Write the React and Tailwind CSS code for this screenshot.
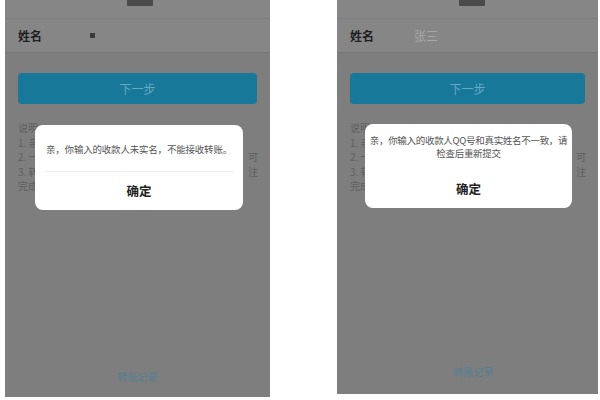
import React from "react";

function Line({ left, right }) {
  return (
    <div className="flex justify-between whitespace-nowrap">
      <span>{left}</span>
      <span>{right}</span>
    </div>
  );
}

function Phone({ name, nameClass, dialog, frameClass, btnClass, recordClass, textClass }) {
  return (
    <div className={`relative overflow-hidden bg-[#7e7e7e] flex flex-col ${frameClass}`}>
      <div className="bg-[#868686]">
        <div className="h-[18px] relative">
          <div className="absolute left-[122px] top-0 w-[26px] h-[6px] bg-[#4a4a4a] rounded-b-[1px]" />
        </div>
        <div className="h-[34px] flex items-center pl-[13px] border-t border-[#7d7d7d]">
          <span className="w-[70px] text-[12px] font-bold text-[#1f1f1f]">姓名</span>
          {name ? (
            <span className={`text-[12px] text-[#a8a8a8] ${nameClass}`}>{name}</span>
          ) : (
            <span className="ml-[2px] w-[5px] h-[5px] bg-[#3a3a3a]" />
          )}
        </div>
      </div>
      <div className="border-t border-[#777]" />
      <div className={`mt-[20px] mx-[13px] h-[31px] rounded-[4px] bg-[#17789a] flex items-center justify-center text-[12px] text-[#65a9c1] ${btnClass}`}>
        下一步
      </div>
      <div className={`mt-[17px] pl-[13px] pr-[12px] text-[10px] leading-[14.5px] text-[#5e5e5e] ${textClass}`}>
        <Line left="说明" right="" />
        <Line left="1. 亲" right="" />
        <Line left="2. 一" right="可" />
        <Line left="3. 转" right="注" />
        <Line left="完成" right="" />
      </div>
      <div className="flex-1" />
      <div className={`text-center text-[10px] text-[#557f95] ${recordClass}`}>转账记录</div>
      {dialog}
    </div>
  );
}

export default function App() {
  return (
    <div
      className="w-[600px] h-[400px] bg-white relative overflow-hidden"
      style={{ fontFamily: '"Noto Sans CJK SC", "Noto Sans", sans-serif' }}
    >
      <div className="flex items-start h-full">
        <div className="ml-[5px]">
          <Phone
            frameClass="w-[265px] h-[397px]"
            btnClass=""
            recordClass="mb-[13px]"
            dialog={
              <div className="absolute left-[30px] top-[125px] w-[208px] h-[85px] bg-white rounded-[8px] flex flex-col">
                <div className="h-[46px] pt-[2px] flex items-center justify-center text-[9.5px] text-[#555] tracking-[-0.2px] whitespace-nowrap">
                  亲，你输入的收款人未实名，不能接收转账。
                </div>
                <div className="mx-[10px] border-t border-[#ececec]" />
                <div className="flex-1 flex items-center justify-center text-[12.5px] font-bold text-[#222]">确定</div>
              </div>
            }
          />
        </div>
        <div className="ml-[67px]">
          <Phone
            name="张三"
            nameClass="ml-[-6px]"
            frameClass="w-[261px] h-[394px]"
            btnClass="mx-[11px]"
            textClass="pl-[11px] pr-[8px]"
            recordClass="mb-[15px] pl-[12px]"
            dialog={
              <div className="absolute left-[28px] top-[124px] w-[207px] h-[84px] bg-white rounded-[8px] flex flex-col">
                <div className="pt-[10px] h-[48px] flex flex-col items-center text-[9.5px] leading-[13px] text-[#555] tracking-[-0.3px] whitespace-nowrap">
                  <div>亲，你输入的收款人QQ号和真实姓名不一致，请</div>
                  <div>检查后重新提交</div>
                </div>
                <div className="flex-1 flex items-center justify-center text-[12.5px] font-bold text-[#222] pb-[2px]">确定</div>
              </div>
            }
          />
        </div>
      </div>
    </div>
  );
}
